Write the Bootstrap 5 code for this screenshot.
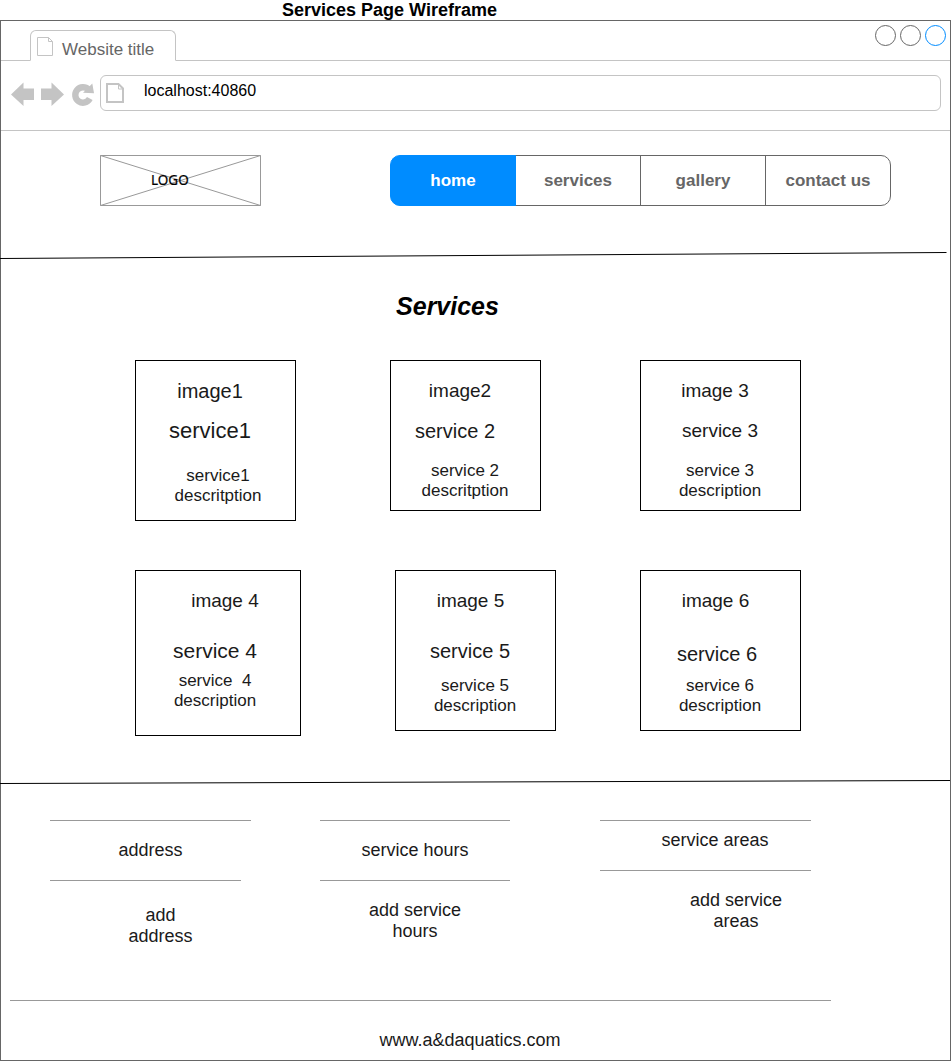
<!DOCTYPE html>
<html lang="en">
<head>
<meta charset="utf-8">
<title>Services Page Wireframe</title>
<link rel="stylesheet" href="https://cdn.jsdelivr.net/npm/bootstrap@5.3.0/dist/css/bootstrap.min.css">
<style>
  body { font-family: "Liberation Sans", Arial, sans-serif; color: #000; background: #fff; line-height: 20px; }
  svg { display: block; overflow: visible; flex: none; }
  .sheet { width: 951px; height: 1061px; overflow: hidden; }
  .sheet-title { font-size: 18px; line-height: 20px; height: 20px; margin: 0; padding-left: 282px; font-weight: 700; white-space: nowrap; }
  .browser { height: 1041px; border: 1px solid #666; }

  /* browser chrome */
  .tab-strip { height: 40px; border-bottom: 1px solid #c4c4c4; padding: 0 4px 0 29px; }
  .tab-item { width: 146px; height: 31px; margin: 9px 0 -1px; border: 1px solid #c4c4c4; border-bottom-color: #fff; border-radius: 6px 6px 0 0; background: #fff; padding: 6px 0 0 6px; color: #666; font-size: 17px; }
  .tab-item span { margin-left: 8px; padding-top: 3px; white-space: nowrap; }
  .window-dots { margin-top: 4px; gap: 4px; }
  .dot { width: 21px; height: 21px; border: 1px solid #666; border-radius: 50%; }
  .dot-blue { border-color: #008cff; }
  .toolbar { height: 70px; border-bottom: 1px solid #c4c4c4; padding: 14px 9px 0 10px; }
  .address-bar { width: 841px; height: 36px; border: 1px solid #c4c4c4; border-radius: 6px; margin-left: 5px; padding: 7px 0 0 5px; font-size: 16px; }
  .address-bar span { margin: -2px 0 0 19px; }

  /* page header */
  .page-head { height: 121px; padding: 24px 0 0 99px; }
  .logo-box { width: 161px; height: 51px; margin-right: 129px; }
  .logo-box text { font-family: "Noto Sans", "Open Sans", sans-serif; font-size: 13.5px; stroke: #000; stroke-width: .2px; }
  .menu { height: 51px; }
  .menu .btn { --bs-btn-color: #666; --bs-btn-border-color: #666; --bs-btn-border-radius: 10px; --bs-btn-active-bg: #008cff; --bs-btn-active-border-color: #008cff; --bs-btn-active-color: #fff; width: 126px; flex: none; padding: 0; font-size: 17px; font-weight: 700; line-height: 49px; }
  .rule-a { height: 8px; }

  /* services */
  .services { height: 520px; }
  .services h1 { margin: 0; padding: 34px 56px 0 0; font-size: 25px; line-height: 24px; font-weight: 700; font-style: italic; }
  .tiles { display: grid; grid-template-columns: 255px 250px 161px; grid-template-rows: 210px 166px; margin: 42px 0 0 134px; }
  .tile { width: 161px; height: 161px; border: 1px solid #000; padding-top: 20px; text-align: center; white-space: nowrap; color: #1a1a1a; }
  .tile > div { margin-left: calc(2 * var(--dx, 0px)); }
  .pic { font-size: 19px; }
  .name { font-size: 20px; margin-top: 20px; }
  .desc { --dx: -.5px; font-size: 17px; margin-top: 20px; white-space: pre; }
  .t1 .pic { --dx: -5.5px; font-size: 20px; }
  .t1 .name { --dx: -5.5px; font-size: 22px; }
  .t1 .desc { --dx: 2.5px; margin-top: 25px; }
  .t2 { width: 151px; height: 151px; }
  .t2 .pic { --dx: -5.5px; }
  .t2 .name { --dx: -10.5px; }
  .t3 { height: 151px; }
  .t3 .pic { --dx: -5.5px; }
  .t6 .pic { --dx: -5px; }
  .t3 .name { --dx: -.5px; font-size: 19px; }
  .t4 { width: 166px; height: 166px; }
  .t4 .pic { --dx: 7px; }
  .t4 .name { --dx: -3px; font-size: 21px; margin-top: 30px; }
  .t4 .desc { --dx: -3px; margin-top: 10px; }
  .t5 { margin-left: 5px; }
  .t5 .pic { --dx: -5px; }
  .t5 .name { --dx: -5.5px; margin-top: 30px; }
  .t5 .desc { margin-top: 15px; }
  .t6 .name { --dx: -3.5px; margin-top: 33px; }
  .t6 .desc { margin-top: 12px; }
  .rule-b { height: 5px; }

  /* footer */
  .foot { font-size: 18px; line-height: 21px; text-align: center; color: #1a1a1a; }
  .foot-cols { height: 215px; margin-left: 49px; padding-top: 35px; }
  .foot-head { height: 61px; border: solid #999; border-width: 1px 0; padding-top: 19px; }
  .foot-head.short { height: 51px; padding: 9px 0 0 19px; }
  .foot-col { width: 190px; margin-right: 80px; }
  .foot-col.wide { width: 201px; margin-right: 69px; }
  .foot-col.areas { width: 211px; margin: 0 0 0 10px; }
  .foot-note { margin-top: 19px; }
  .areas .foot-note { padding-left: 61px; }
  .half-rule { border-bottom: 0; }
  .under { width: 191px; height: 1px; background: #999; margin-top: -1px; }
  .foot-end { width: 821px; border-top: 1px solid #999; margin-left: 9px; padding: 29px 0 0 99px; text-align: center; }
  .foot-end span { display: block; width: 722px; margin-left: -99px; padding-left: 198px; }
</style>
<script src="https://cdn.jsdelivr.net/npm/bootstrap@5.3.0/dist/js/bootstrap.bundle.min.js"></script>
</head>
<body>
<div class="sheet">
  <h2 class="sheet-title">Services Page Wireframe</h2>
  <div class="browser">
    <div class="tab-strip d-flex justify-content-between">
      <div class="tab-item d-flex">
        <svg width="17" height="20" fill="none" stroke="#c4c4c4"><path d="M.5.5h11l4 4v14H.5zM11.500.5v4h4"/></svg>
        <span>Website title</span>
      </div>
      <div class="window-dots d-flex">
        <div class="dot"></div><div class="dot"></div><div class="dot dot-blue"></div>
      </div>
    </div>
    <div class="toolbar d-flex">
      <svg width="84" height="36" fill="#c4c4c4">
        <path d="M0 19.500 12.500 7.500v6H23v11.500H12.500v6zM30 13.500h10.500v-6L53 19.500 40.500 31v-6H30z"/>
        <path d="M78.800 23.600A7.700 7.700 0 1 1 77.500 14.600" fill="none" stroke="#c4c4c4" stroke-width="6.400"/>
        <path d="M81.300 8.500 83 18.300 72 17.800z"/>
      </svg>
      <div class="address-bar d-flex">
        <svg width="19" height="21" fill="none" stroke="#c4c4c4"><path stroke-width="2" d="M1 1h11.500l4.500 4.500V19H1z"/><path d="M12.500 1.500v4.500h4.500"/></svg>
        <span>localhost:40860</span>
      </div>
    </div>

    <header class="page-head d-flex">
      <svg class="logo-box" width="161" height="51"><path fill="none" stroke="#999" d="M.5.5h160v50H.5zl160 50M160.500.5.500 50.500"/><text x="51" y="30">LOGO</text></svg>
      <nav class="menu btn-group">
        <a class="btn active">home</a><a class="btn">services</a><a class="btn">gallery</a><a class="btn">contact us</a>
      </nav>
    </header>
    <svg class="rule-a" width="949" height="8"><path d="M-1 6.500 945.500.5" stroke="#000"/></svg>

    <main class="services">
      <h1 class="text-center">Services</h1>
      <div class="tiles">
        <div class="tile t1"><div class="pic">image1</div><div class="name">service1</div><div class="desc">service1<br>descritption</div></div>
        <div class="tile t2"><div class="pic">image2</div><div class="name">service 2</div><div class="desc">service 2<br>descritption</div></div>
        <div class="tile t3"><div class="pic">image 3</div><div class="name">service 3</div><div class="desc">service 3<br>description</div></div>
        <div class="tile t4"><div class="pic">image 4</div><div class="name">service 4</div><div class="desc">service  4<br>description</div></div>
        <div class="tile t5"><div class="pic">image 5</div><div class="name">service 5</div><div class="desc">service 5<br>description</div></div>
        <div class="tile t6"><div class="pic">image 6</div><div class="name">service 6</div><div class="desc">service 6<br>description</div></div>
      </div>
    </main>
    <svg class="rule-b" width="949" height="5"><path d="M-1 3.500 949 .5" stroke="#000"/></svg>

    <footer class="foot">
      <div class="foot-cols d-flex">
        <div class="foot-col wide">
          <div class="foot-head half-rule">address</div>
          <div class="under"></div>
          <div class="mt-4 ps-3 ms-1">add<br>address</div>
        </div>
        <div class="foot-col">
          <div class="foot-head">service hours</div>
          <div class="foot-note">add service<br>hours</div>
        </div>
        <div class="foot-col areas">
          <div class="foot-head short">service areas</div>
          <div class="foot-note">add service<br>areas</div>
        </div>
      </div>
      <div class="foot-end"><span>www.a&amp;daquatics.com</span></div>
    </footer>
  </div>
</div>
</body>
</html>
